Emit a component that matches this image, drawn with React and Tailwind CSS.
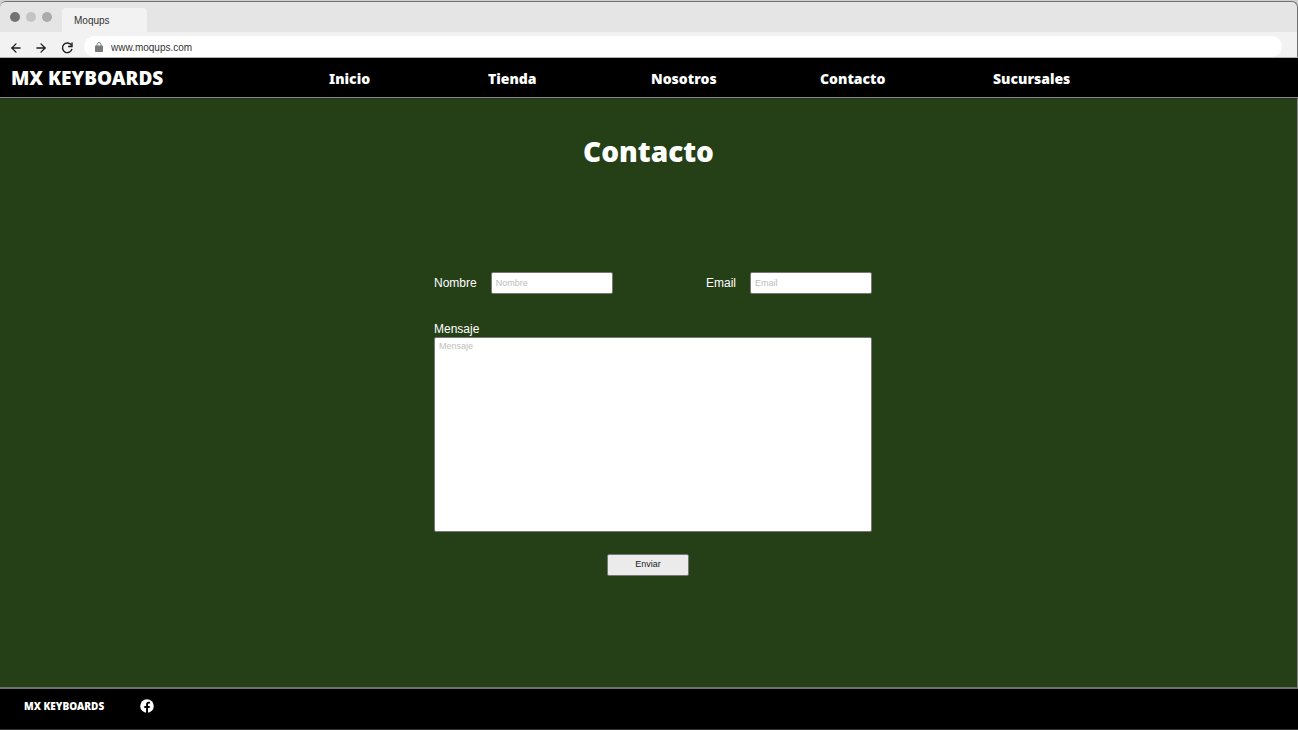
import { ArrowLeft, ArrowRight } from "lucide-react";

const links = ["Inicio", "Tienda", "Nosotros", "Contacto", "Sucursales"];

function BrowserBar() {
  return (
    <div className="rounded-t-md border-t border-r border-[#707070] bg-[#e5e5e5]">
      <div className="flex h-[30px] items-end">
        <div className="flex gap-[6px] self-center pl-[10px]">
          <span className="size-[10px] rounded-full bg-[#737373]" />
          <span className="size-[10px] rounded-full bg-[#c4c4c4]" />
          <span className="size-[10px] rounded-full bg-[#ababab]" />
        </div>
        <div className="ml-[10px] h-6 w-[85px] rounded-t bg-[#f2f2f2] pt-px pl-3 text-[10px] leading-6 text-[#333]">
          Moqups
        </div>
      </div>
      <div className="flex h-[25px] items-end bg-[#f2f2f2] pr-[15px] pl-[9px] text-[#1c1c1c]">
        <div className="flex h-[19px] items-center gap-3">
          <button type="button" aria-label="Back" className="w-[13px]">
            <ArrowLeft size={14} strokeWidth={2.2} />
          </button>
          <button type="button" aria-label="Forward" className="w-[14px]">
            <ArrowRight size={14} strokeWidth={2.2} />
          </button>
          <button type="button" aria-label="Reload">
            <svg width="14" height="14" viewBox="0 0 14 14" fill="none" stroke="currentColor" strokeWidth="1.4">
              <path d="M11.4 4.3A4.8 4.8 0 1 0 12 7.9" />
              <path d="M12 1.6v3.9H8.1" />
            </svg>
          </button>
        </div>
        <div className="ml-[10px] flex h-[21px] flex-1 items-center gap-2 rounded-full bg-white pt-px pl-[11px]">
          <svg width="8" height="10" viewBox="0 0 8 10" fill="none">
            <rect y="3.5" width="8" height="6.5" rx="0.8" fill="#7a7a7a" />
            <path d="M2 4V2.6a2 2 0 0 1 4 0V4" stroke="#7a7a7a" strokeWidth="1" />
          </svg>
          <input
            type="text"
            aria-label="Address"
            defaultValue="www.moqups.com"
            className="h-5 flex-1 bg-transparent text-[10px] text-[#333] outline-none"
          />
        </div>
      </div>
    </div>
  );
}

function Field({ id, label, type }) {
  return (
    <div className="flex items-center gap-[14px]">
      <label htmlFor={id} className="text-xs leading-4 text-white">
        {label}
      </label>
      <input
        id={id}
        type={type}
        placeholder={label}
        className="h-[22px] w-[122px] rounded-xs border border-[#777] bg-white px-1 text-[9px] text-[#333] placeholder:text-[#bdbdbd]"
      />
    </div>
  );
}

export default function App() {
  return (
    <div className="flex min-h-screen flex-col bg-[#d0d0d0] pt-px font-['Liberation_Sans',sans-serif]">
      <BrowserBar />
      <header className="grid h-[41px] grid-cols-[318fr_159fr_163fr_169fr_173fr_305fr] items-center border-y border-t-[#b0b0b0] border-b-[#8a8a8a] bg-black pl-[11px] font-['Noto_Sans',sans-serif] font-black text-white">
        <a href="#inicio" className="text-[19px] leading-6">
          MX KEYBOARDS
        </a>
        {links.map((link) => (
          <a key={link} href={"#" + link.toLowerCase()} className="pt-[2px] text-sm leading-5">
            {link}
          </a>
        ))}
      </header>
      <main className="flex flex-1 flex-col items-center border-t border-r border-t-[#26301f] border-r-[#858585] bg-[#253f17]">
        <h1 className="mt-8 font-['Noto_Sans',sans-serif] text-[28px] leading-10 font-black text-white">
          Contacto
        </h1>
        <form className="mt-[101px] flex w-full max-w-[447px] flex-col pl-[9px]" onSubmit={(e) => e.preventDefault()}>
          <div className="flex justify-between">
            <Field id="nombre" label="Nombre" type="text" />
            <Field id="email" label="Email" type="email" />
          </div>
          <label htmlFor="mensaje" className="mt-[27px] text-xs leading-4 text-white">
            Mensaje
          </label>
          <textarea
            id="mensaje"
            placeholder="Mensaje"
            className="h-[195px] resize-none rounded-xs border border-[#777] bg-white px-1 py-[2px] text-[9px] leading-3 text-[#333] placeholder:text-[#bdbdbd]"
          />
          <button
            type="submit"
            className="mt-[22px] mr-[10px] h-[22px] w-[82px] self-center rounded-xs border border-[#777] bg-[#ebebeb] text-[9px] text-[#222]"
          >
            Enviar
          </button>
        </form>
      </main>
      <footer className="flex h-[43px] items-start gap-9 border-t-2 border-b border-t-[#707070] border-b-[#333] bg-black pt-[9px] pl-6 text-white">
        <span className="font-['Noto_Sans',sans-serif] text-[10px] leading-4 font-black">MX KEYBOARDS</span>
        <a href="#facebook" aria-label="Facebook" className="pt-px">
          <svg width="14" height="14" viewBox="0 0 14 14">
            <circle cx="7" cy="7" r="6.8" fill="white" />
            <path
              d="M6.1 14V8.9H4.3V7h1.8V5.5C6.1 3.7 7.1 2.8 8.7 2.8c.7 0 1.3.1 1.3.1v1.6h-.8c-.9 0-1.2.5-1.2 1.1V7h1.9l-.3 1.9H8V14z"
              fill="black"
            />
          </svg>
        </a>
      </footer>
    </div>
  );
}
